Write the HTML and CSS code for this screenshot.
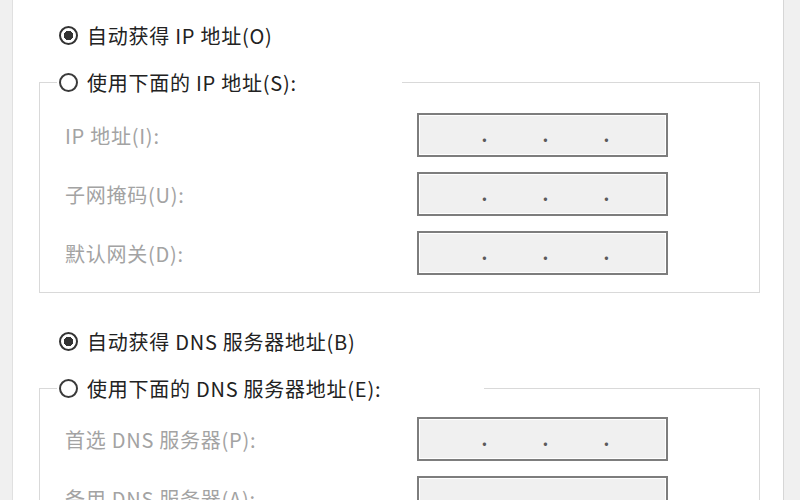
FILE: index.html
```html
<!DOCTYPE html>
<html lang="zh-CN">
<head>
<meta charset="utf-8">
<title>IPv4 属性</title>
<link rel="stylesheet" href="styles.css">
</head>
<body>
<div class="page">
  <div class="side-l"></div>
  <div class="main">
    <label class="opt first"><input type="radio" name="ip" checked><span>自动获得 IP 地址(O)</span></label>
    <fieldset class="group">
      <legend class="legend legend-ip"><label class="opt"><input type="radio" name="ip"><span>使用下面的 IP 地址(S):</span></label></legend>
      <div class="row"><span class="lbl">IP 地址(I):</span><div class="ip"><span class="dot">.</span><span class="dot">.</span><span class="dot">.</span></div></div>
      <div class="row"><span class="lbl">子网掩码(U):</span><div class="ip"><span class="dot">.</span><span class="dot">.</span><span class="dot">.</span></div></div>
      <div class="row"><span class="lbl">默认网关(D):</span><div class="ip"><span class="dot">.</span><span class="dot">.</span><span class="dot">.</span></div></div>
    </fieldset>
    <label class="opt second"><input type="radio" name="dns" checked><span>自动获得 DNS 服务器地址(B)</span></label>
    <fieldset class="group group-dns">
      <legend class="legend legend-dns"><label class="opt"><input type="radio" name="dns"><span>使用下面的 DNS 服务器地址(E):</span></label></legend>
      <div class="row"><span class="lbl">首选 DNS 服务器(P):</span><div class="ip"><span class="dot">.</span><span class="dot">.</span><span class="dot">.</span></div></div>
      <div class="row"><span class="lbl">备用 DNS 服务器(A):</span><div class="ip"><span class="dot">.</span><span class="dot">.</span><span class="dot">.</span></div></div>
    </fieldset>
  </div>
  <div class="side-r"></div>
</div>
</body>
</html>
```
FILE: styles.css
```css
html, body {
  margin: 0;
  padding: 0;
  background: #ffffff;
}
body {
  font-family: "Noto Sans CJK SC", "Microsoft YaHei", sans-serif;
}
.page {
  display: flex;
  width: 800px;
  height: 500px;
  overflow: hidden;
}
.side-l {
  width: 12px;
  flex: none;
  background: #f0f0f0;
  border-right: 1px solid #e0e0e0;
}
.side-r {
  width: 16px;
  flex: none;
  background: #f0f0f0;
  border-left: 1px solid #d6d6d6;
}
.main {
  flex: 1;
  min-width: 0;
  padding-top: 21px;
  background: #ffffff;
}
.opt {
  display: flex;
  align-items: center;
  gap: 9px;
  height: 28px;
  font-size: 20px;
  letter-spacing: 0.75px;
  color: #222222;
  white-space: nowrap;
}
.opt.first,
.opt.second {
  margin-left: 46px;
}
.opt.second {
  margin-top: 34px;
}
.opt input {
  appearance: none;
  -webkit-appearance: none;
  flex: none;
  width: 19px;
  height: 19px;
  margin: 0;
  border: 2px solid #3a3a3a;
  border-radius: 50%;
  background: #ffffff;
  box-sizing: border-box;
}
.opt input:checked {
  border-width: 2.2px;
  border-color: #333333;
  background: radial-gradient(circle, #333333 0 4.5px, #ffffff 5px);
}
.group {
  margin: 19px 23px 0 26px;
  padding: 17px 0 17px 17px;
  border: 1px solid #d9d9d9;
  min-width: 0;
}
.group-dns {
  padding-top: 15px;
}
.legend {
  padding: 0 0 0 2px;
  box-sizing: border-box;
  height: 28px;
}
.legend-ip {
  width: 345px;
}
.legend-dns {
  width: 427px;
}
.row {
  display: flex;
  align-items: center;
  height: 44px;
  padding-left: 8px;
}
.row + .row {
  margin-top: 15px;
}
.lbl {
  width: 352px;
  flex: none;
  font-size: 20px;
  letter-spacing: 0.75px;
  color: #a3a3a3;
  white-space: nowrap;
}
.ip {
  display: flex;
  align-items: center;
  width: 251px;
  height: 44px;
  box-sizing: border-box;
  padding-left: 35px;
  border: 2px solid #7d7d7d;
  box-shadow: inset 0 0 0 1px #ffffff;
  background: #f0f0f0;
}
.dot {
  width: 61px;
  text-align: center;
  font-size: 18px;
  font-weight: bold;
  line-height: 1;
  color: #5a5a5a;
  transform: translateY(-1px);
}
```
